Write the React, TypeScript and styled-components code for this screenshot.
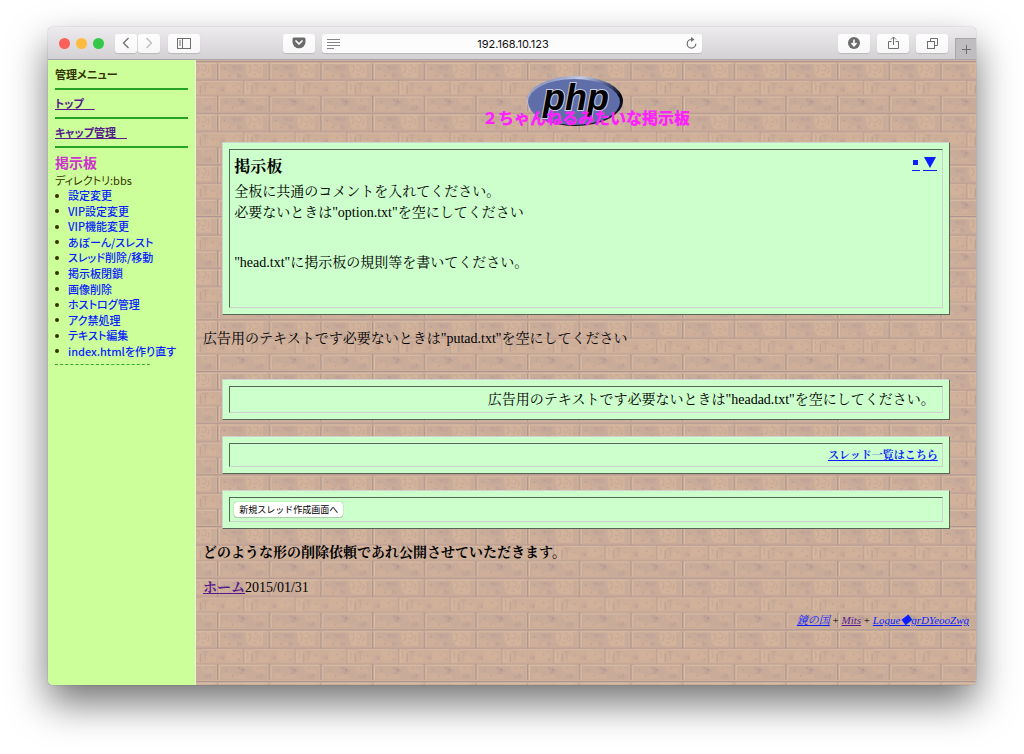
import React from "react";
import styled, { createGlobalStyle } from "styled-components";

const serif = `"Liberation Serif", "Noto Serif CJK JP", "Noto Sans CJK JP", serif`;
const sans = `"Noto Sans CJK JP", "Noto Sans", sans-serif`;

const GlobalStyle = createGlobalStyle`
  *, *::before, *::after { box-sizing: border-box; }
  body { margin: 0; background: #fff; }
  h1, h2, p, ul, hr { margin: 0; padding: 0; }
`;

const Desktop = styled.div`
  display: flex;
  min-height: 100vh;
  padding: 27px 48px 69px;
  overflow: hidden;
`;

const BrowserWindow = styled.div`
  flex: 1;
  min-width: 0;
  display: flex;
  flex-direction: column;
  border-radius: 5px;
  overflow: hidden;
  box-shadow: 0 0 1px rgba(0, 0, 0, 0.5), 0 18px 38px rgba(0, 0, 0, 0.55);
`;

const Toolbar = styled.header`
  display: grid;
  grid-template-columns: minmax(0, 1fr) 41% minmax(0, 1fr);
  align-items: center;
  height: 33px;
  background: linear-gradient(#edebed, #d3d1d3);
  border-bottom: 1px solid #a8a6a8;
`;

const ToolGroup = styled.div<{ $end?: boolean }>`
  display: flex;
  align-items: center;
  justify-content: ${(p) => (p.$end ? "flex-end" : "flex-start")};
  gap: 7px;
  height: 100%;
  padding: ${(p) => (p.$end ? "0" : "0 7px 0 11px")};
`;

const Lights = styled.div`
  display: flex;
  gap: 6px;
  margin-right: 4px;
`;

const Light = styled.button<{ $color: string }>`
  width: 11px;
  height: 11px;
  padding: 0;
  border: 0;
  border-radius: 50%;
  background: ${(p) => p.$color};
`;

const Pair = styled.div`
  display: flex;
  gap: 1px;
  margin-right: 1px;
`;

const ToolButton = styled.button<{ $narrow?: boolean; $push?: boolean }>`
  display: flex;
  align-items: center;
  justify-content: center;
  width: ${(p) => (p.$narrow ? 22 : 32)}px;
  height: 19px;
  padding: 0;
  border: 0;
  border-radius: 3px;
  margin-left: ${(p) => (p.$push ? "auto" : "0")};
  background: linear-gradient(#fefefe, #f7f7f7);
  box-shadow: 0 1px 1px rgba(0, 0, 0, 0.14);
`;

const NewTab = styled.button`
  align-self: flex-end;
  display: flex;
  align-items: center;
  justify-content: center;
  width: 21px;
  height: 21px;
  padding: 0;
  border: solid #a9a7a9;
  border-width: 1px 0 0 1px;
  background: #bfbdbf;
`;

const AddressBar = styled.div`
  display: flex;
  align-items: center;
  height: 19px;
  padding: 0 5px;
  border-radius: 3px;
  background: #fcfcfc;
  box-shadow: 0 1px 1px rgba(0, 0, 0, 0.14);
`;

const Address = styled.input`
  flex: 1;
  min-width: 0;
  padding: 2px 0 0;
  border: 0;
  background: none;
  text-align: center;
  color: #111;
  font: 11px/16px Inter, sans-serif;
`;

const PlainButton = styled.button`
  display: flex;
  padding: 0;
  border: 0;
  background: none;
`;

const Frames = styled.div`
  flex: 1;
  display: flex;
`;

const Sidebar = styled.nav`
  flex: none;
  width: 148px;
  padding: 0 7px;
  border-right: 1px solid #e9f2dc;
  background: #ccff99;
  color: #330;
  font-family: ${sans};
  font-feature-settings: "palt";
`;

const MenuHeading = styled.h2`
  height: 28px;
  font-size: 11px;
  line-height: 29px;
  font-weight: 700;
`;

const MenuRow = styled.p`
  height: 27px;
  font-size: 11px;
  line-height: 27px;
  font-weight: 700;
`;

const Rule = styled.hr`
  height: 2px;
  border: 0;
  background: #26a326;
`;

const BoardName = styled.h2`
  margin-top: 4px;
  color: #cc33cc;
  font-size: 14px;
  line-height: 21px;
  font-weight: 700;
`;

const Directory = styled.p`
  font-size: 11px;
  line-height: 15px;
`;

const MenuList = styled.ul`
  display: grid;
  grid-auto-rows: 1fr;
  min-height: 171px;
  padding-left: 13px;
  list-style: none;
  font-size: 11px;
  line-height: 15px;
  font-weight: 500;
`;

const MenuItem = styled.li`
  display: flex;
  align-items: center;
  white-space: nowrap;

  &::before {
    content: "";
    width: 4px;
    height: 4px;
    margin: 0 9px 0 -13px;
    border-radius: 50%;
    background: #330;
  }
`;

const DottedRule = styled.hr`
  width: 95px;
  margin-top: 5px;
  border: 0;
  border-top: 1px dashed #33aa33;
`;

const Link = styled.a<{ $visited?: boolean; $plain?: boolean }>`
  color: ${(p) => (p.$visited ? "#551a8b" : "#0a1eff")};
  text-decoration: ${(p) => (p.$plain ? "none" : "underline")};
`;

const Main = styled.main`
  position: relative;
  isolation: isolate;
  flex: 1;
  min-width: 0;
  padding: 16px 7px 40px;
  color: #000;
  font-family: ${serif};
  font-size: 14px;
  line-height: 21px;
`;

const Wallpaper = styled.svg`
  position: absolute;
  inset: 0;
  z-index: -1;
  width: 100%;
  height: 100%;
`;

const Masthead = styled.div`
  display: grid;
  justify-items: center;
  align-items: end;
  margin-bottom: 15px;

  & > * { grid-area: 1 / 1; }
`;

const Logo = styled.svg`
  margin-right: 22px;
`;

const SiteTitle = styled.h1`
  color: #ff22ff;
  font-family: ${sans};
  font-size: 16px;
  line-height: 20px;
  font-weight: 900;
`;

const Panel = styled.section`
  width: 95%;
  margin: 0 auto 16px;
  padding: 6px;
  border: 1px solid;
  border-color: #cfd2cf #566656 #566656 #cfd2cf;
  background: #ccffcc;
`;

const Cell = styled.div<{ $right?: boolean }>`
  padding: 2px 4px;
  border: 1px solid;
  border-color: #566656 #cfd2cf #cfd2cf #566656;
  text-align: ${(p) => (p.$right ? "right" : "left")};
`;

const IntroCell = styled(Cell)`
  padding: 6px 5px 34px 4px;
`;

const AdCell = styled(Cell)`
  padding-right: 7px;
`;

const IntroHead = styled.div`
  display: flex;
  justify-content: space-between;
  align-items: flex-start;
  margin-bottom: 3px;
`;

const IntroTitle = styled.h2`
  font-size: 16px;
  line-height: 22px;
`;

const Jumps = styled.div`
  display: flex;
  gap: 3px;
`;

const Jump = styled.a`
  display: flex;
  align-items: center;
  justify-content: center;
  height: 15px;
  padding: 0 1px;
  border-bottom: 1px solid #0a1eff;
`;

const Rules = styled.p`
  margin-top: 29px;
`;

const Notice = styled.p`
  margin: -3px 0 30px;
`;

const ThreadLink = styled.p`
  font-size: 11px;
  line-height: 18px;
  font-weight: 700;
`;

const NewThread = styled.button`
  display: block;
  height: 15px;
  margin: 2px 0;
  padding: 0 5px;
  border: 0;
  border-radius: 3px;
  background: #fff;
  box-shadow: 0 0 1px rgba(0, 0, 0, 0.5), 0 1px 1px rgba(0, 0, 0, 0.15);
  color: #000;
  font: 9px/15px ${sans};
`;

const Policy = styled.p`
  margin: -3px 0 14px;
  font-weight: 700;
`;

const Credits = styled.p`
  margin-top: 13px;
  font-size: 11px;
  line-height: 18px;
  text-align: right;

  a { font-style: italic; }
`;

const menuItems = [
  "設定変更",
  "VIP設定変更",
  "VIP機能変更",
  "あぼーん/スレスト",
  "スレッド削除/移動",
  "掲示板閉鎖",
  "画像削除",
  "ホストログ管理",
  "アク禁処理",
  "テキスト編集",
  "index.htmlを作り直す",
];

const stroke = { fill: "none", stroke: "#6e6e6e", strokeWidth: 1 };

function Bricks() {
  return (
    <Wallpaper aria-hidden="true">
      <defs>
        <pattern id="bricks" width="155" height="155" patternUnits="userSpaceOnUse" patternTransform="translate(21 1) scale(.33333)">
          <rect width="155" height="155" fill="#d0b19a" />
          <g fill="#c8ab99">
            <rect x="9" y="9" width="142" height="45" />
            <rect x="9" y="108" width="142" height="44" />
          </g>
          <g fill="#cdae99">
            <rect x="0" y="61" width="76" height="40" />
            <rect x="110" y="61" width="45" height="40" />
          </g>
          <g fill="#d3b39b">
            <path d="M86 10h52v40H96l-8-14zM84 61h18v38H84z" />
            <path d="M12 30q14-8 24 4t22 2v16H12zM30 64q18-4 34 8t-8 20-36-4zM116 82q16-6 36 2v14h-36zM14 134q20-6 34 2t30-4l10 16H14zM104 112q20-2 40 8l2 16q-18-10-32-4z" opacity=".6" />
          </g>
          <g fill="#bfa196">
            <path d="M38 12q14 4 26 0t14 6l-6 10q-16-2-24-2zM60 40q8-4 14 2t-4 8-10-2zM8 80q10-6 18 0l-4 10H8zM56 112q14-4 22 4t14 2l-4 12q-12-2-20-4zM116 138q12-4 24 2l-4 8h-20z" opacity=".45" />
          </g>
          <g fill="none" stroke="#ae9591">
            <path d="M0 2H155" strokeWidth="4" />
            <path d="M0 57H155M0 104H155" strokeWidth="3" opacity=".75" />
            <path d="M2 8V57M2 106V152" strokeWidth="4" />
            <path d="M80 59V102M105 72V98" strokeWidth="3" opacity=".8" />
            <path d="M92 15q10-5 9 7t-8 13M112 12q14 1 10 12t-14 2M128 18q8 10-2 18M108 40h10M88 66q8 8 2 22M110 68h18M120 70v24" strokeWidth="3" opacity=".45" />
            <path d="M68 118l14 8M76 112l2 22M66 130l8-4" strokeWidth="2" opacity=".7" />
          </g>
          <g fill="none" stroke="#dcbfa5" strokeWidth="3">
            <path d="M8 7H150M7 8V54M8 108H150M7 108V150" />
            <path d="M0 61H76M84 61V100M109 61H155" opacity=".7" />
          </g>
          <g fill="#a38a86" opacity=".75">
            <circle cx="22" cy="23" r="2" /><circle cx="52" cy="17" r="2" /><circle cx="64" cy="39" r="2" />
            <circle cx="38" cy="44" r="2" /><circle cx="28" cy="122" r="2" /><circle cx="67" cy="116" r="2" />
            <circle cx="79" cy="121" r="3" /><circle cx="74" cy="132" r="2" /><circle cx="122" cy="118" r="2" />
            <circle cx="134" cy="137" r="2" /><circle cx="50" cy="75" r="2" /><circle cx="20" cy="88" r="2" />
            <circle cx="142" cy="80" r="2" /><circle cx="66" cy="90" r="2" /><circle cx="46" cy="140" r="2" />
          </g>
        </pattern>
      </defs>
      <rect width="100%" height="100%" fill="url(#bricks)" />
    </Wallpaper>
  );
}

function PhpLogo() {
  return (
    <Logo width="98" height="51" viewBox="0 0 98 51" role="img" aria-label="php">
      <defs>
        <linearGradient id="rim" x1="0" y1="0" x2="1" y2="1">
          <stop offset="0" stopColor="#5566a0" />
          <stop offset=".3" stopColor="#c3cbe6" />
          <stop offset=".5" stopColor="#4c5887" />
          <stop offset=".68" stopColor="#05070f" />
          <stop offset="1" stopColor="#20284a" />
        </linearGradient>
      </defs>
      <ellipse cx="49" cy="25" rx="48" ry="25" fill="url(#rim)" />
      <ellipse cx="48" cy="26" rx="46" ry="23" fill="#5f6da8" />
      <text
        x="50" y="34" textAnchor="middle" fontFamily="Liberation Sans, sans-serif"
        fontSize="36" fontWeight="700" fontStyle="italic" fill="#000"
        stroke="#c9cddd" strokeWidth="2" paintOrder="stroke"
      >
        php
      </text>
    </Logo>
  );
}

function BrowserToolbar() {
  return (
    <Toolbar>
      <ToolGroup>
        <Lights>
          <Light $color="#fc605b" aria-label="閉じる" />
          <Light $color="#fdbc40" aria-label="しまう" />
          <Light $color="#34c84a" aria-label="拡大" />
        </Lights>
        <Pair>
          <ToolButton $narrow aria-label="戻る">
            <svg width="8" height="12" {...stroke}><path d="M6.500 1L1.500 6l5 5" strokeWidth="1.300" /></svg>
          </ToolButton>
          <ToolButton $narrow aria-label="進む">
            <svg width="8" height="12" {...stroke} stroke="#bbb"><path d="M1.500 1l5 5-5 5" strokeWidth="1.300" /></svg>
          </ToolButton>
        </Pair>
        <ToolButton aria-label="サイドバー">
          <svg width="14" height="11" {...stroke}>
            <rect x=".5" y=".5" width="13" height="10" /><path d="M5.500 .5v10M2 3h2M2 5h2M2 7h2" />
          </svg>
        </ToolButton>
        <ToolButton $push aria-label="Pocket">
          <svg width="14" height="12">
            <path d="M2 .5h10q1.500 0 1.500 1.500v3a6.500 6.300 0 0 1-13 0V2Q.5.5 2 .5z" fill="#6b6b6b" />
            <path d="M4 4l3 3 3-3" fill="none" stroke="#fff" strokeWidth="1.700" strokeLinecap="round" strokeLinejoin="round" />
          </svg>
        </ToolButton>
      </ToolGroup>
      <AddressBar>
        <PlainButton aria-label="リーダー">
          <svg width="13" height="11" {...stroke}><path d="M0 1.500h13M0 4.500h13M0 7.500h13M0 10.500h7" stroke="#858585" /></svg>
        </PlainButton>
        <Address aria-label="アドレス" defaultValue="192.168.10.123" />
        <PlainButton aria-label="再読み込み">
          <svg width="11" height="12" {...stroke}>
            <path d="M5.500 2.500a4.300 4.300 0 1 0 4.300 4.300" strokeWidth="1.200" />
            <path d="M5 0l3.500 2.500L5 5z" fill="#6e6e6e" stroke="none" />
          </svg>
        </PlainButton>
      </AddressBar>
      <ToolGroup $end>
        <ToolButton aria-label="ダウンロード">
          <svg width="12" height="12">
            <circle cx="6" cy="6" r="6" fill="#6b6b6b" />
            <path d="M6 2.500v6M3.500 6L6 8.700 8.500 6" fill="none" stroke="#fff" strokeWidth="1.600" />
          </svg>
        </ToolButton>
        <ToolButton aria-label="共有">
          <svg width="11" height="14" {...stroke}>
            <path d="M3.500 5.500H.5v7h10v-7h-3M5.500 9V1M3 3.500L5.500 1 8 3.500" />
          </svg>
        </ToolButton>
        <ToolButton aria-label="タブ一覧">
          <svg width="11" height="11" {...stroke}>
            <rect x=".5" y="3.500" width="7" height="7" /><path d="M3.500 3V.5h7v7H8" />
          </svg>
        </ToolButton>
        <NewTab aria-label="新規タブ">
          <svg width="11" height="11" {...stroke}><path d="M5.500 1v9M1 5.500h9" /></svg>
        </NewTab>
      </ToolGroup>
    </Toolbar>
  );
}

export default function App() {
  return (
    <Desktop>
      <GlobalStyle />
      <BrowserWindow>
        <BrowserToolbar />
        <Frames>
          <Sidebar>
            <MenuHeading>管理メニュー</MenuHeading>
            <Rule />
            <MenuRow><Link $visited href="#top">トップ　</Link></MenuRow>
            <Rule />
            <MenuRow><Link $visited href="#cap">キャップ管理　</Link></MenuRow>
            <Rule />
            <BoardName>掲示板</BoardName>
            <Directory>ディレクトリ:bbs</Directory>
            <MenuList>
              {menuItems.map((item) => (
                <MenuItem key={item}><Link $plain href="#menu">{item}</Link></MenuItem>
              ))}
            </MenuList>
            <DottedRule />
          </Sidebar>
          <Main>
            <Bricks />
            <Masthead>
              <PhpLogo />
              <SiteTitle>２ちゃんねるみたいな掲示板</SiteTitle>
            </Masthead>
            <Panel>
              <IntroCell>
                <IntroHead>
                  <IntroTitle>掲示板</IntroTitle>
                  <Jumps>
                    <Jump href="#menu" aria-label="メニュー">
                      <svg width="6" height="6"><rect width="5" height="5" fill="#0a1eff" /></svg>
                    </Jump>
                    <Jump href="#bottom" aria-label="下へ">
                      <svg width="12" height="12"><path d="M0 0h12L6 11z" fill="#0a1eff" /></svg>
                    </Jump>
                  </Jumps>
                </IntroHead>
                <p>全板に共通のコメントを入れてください。<br />必要ないときは"option.txt"を空にしてください</p>
                <Rules>"head.txt"に掲示板の規則等を書いてください。</Rules>
              </IntroCell>
            </Panel>
            <Notice>広告用のテキストです必要ないときは"putad.txt"を空にしてください</Notice>
            <Panel>
              <AdCell $right>広告用のテキストです必要ないときは"headad.txt"を空にしてください。</AdCell>
            </Panel>
            <Panel>
              <Cell $right>
                <ThreadLink><Link href="#threads">スレッド一覧はこちら</Link></ThreadLink>
              </Cell>
            </Panel>
            <Panel>
              <Cell><NewThread>新規スレッド作成画面へ</NewThread></Cell>
            </Panel>
            <Policy>どのような形の削除依頼であれ公開させていただきます。</Policy>
            <p><b><Link $visited href="#home">ホーム</Link></b>2015/01/31</p>
            <Credits>
              <Link href="#kagami">鏡の国</Link> + <Link $visited href="#mits">Mits</Link> + <Link href="#logue">Logue◆grDYeooZwg</Link>
            </Credits>
          </Main>
        </Frames>
      </BrowserWindow>
    </Desktop>
  );
}
